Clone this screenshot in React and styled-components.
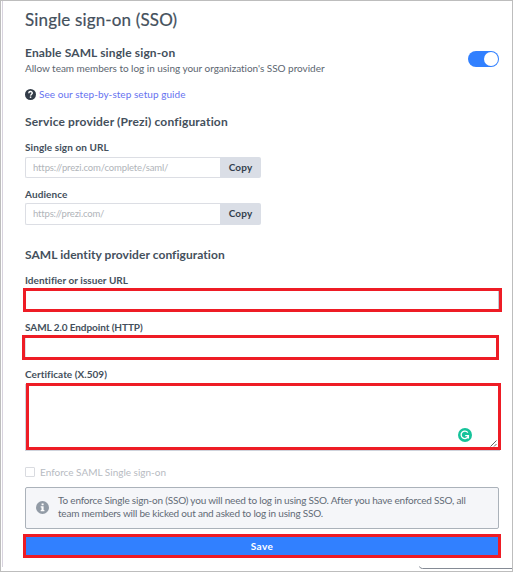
import React from "react";
import styled, { createGlobalStyle } from "styled-components";

const GlobalStyle = createGlobalStyle`
  * { box-sizing: border-box; }
  body { margin: 0; background: #fff; }
`;

const Page = styled.div`
  width: 513px;
  height: 572px;
  border: 1px solid #bdbdbd;
  padding-left: 1px;
  position: relative;
  overflow: hidden;
  font-family: Lato, "Open Sans", sans-serif;
  color: #44505c;
`;

const Panel = styled.main`
  height: 566px;
  border-left: 1px solid #d8d3de;
  padding: 8px 11px 0 22px;
  display: flex;
  flex-direction: column;
`;

const Title = styled.h1`
  margin: 0;
  font-size: 17px;
  line-height: 22px;
  font-weight: 400;
  letter-spacing: 0.15px;
  white-space: nowrap;
  -webkit-text-stroke: 0.2px currentColor;
`;

const Heading = styled.h2`
  margin: ${(p) => p.$top || 0}px 0 0;
  font-size: 12px;
  line-height: 16px;
  font-weight: 700;
  letter-spacing: ${(p) => p.$spacing}px;
  white-space: nowrap;
`;

const EnableRow = styled.section`
  display: flex;
  justify-content: space-between;
  margin-top: 14px;
  padding-right: 2px;
`;

const Description = styled.p`
  margin: 0;
  font-size: 10px;
  line-height: 14px;
  letter-spacing: -0.03px;
  color: #5c6670;
  white-space: nowrap;
`;

const Toggle = styled.div`
  width: 31px;
  height: 16px;
  margin-top: 6px;
  padding: 1px;
  border-radius: 8px;
  background: #3180ff;
  display: flex;
  justify-content: flex-end;
`;

const Knob = styled.span`
  width: 14px;
  height: 14px;
  border-radius: 50%;
  background: #fff;
`;

const Guide = styled.div`
  display: flex;
  align-items: center;
  gap: 3px;
  height: 14px;
  margin-top: 12px;
`;

const GuideLink = styled.a`
  font-size: 10px;
  line-height: 14px;
  letter-spacing: 0.05px;
  color: #6672f0;
  white-space: nowrap;
`;

const Label = styled.label`
  display: block;
  margin-top: ${(p) => p.$top}px;
  font-size: 10px;
  line-height: 14px;
  font-weight: 700;
  letter-spacing: ${(p) => p.$spacing}px;
  white-space: nowrap;
`;

const CopyField = styled.div`
  display: flex;
  width: 236px;
  height: ${(p) => p.$height}px;
  margin-top: ${(p) => p.$top}px;
`;

const Value = styled.div`
  width: 195px;
  border: 1px solid #dcdee4;
  border-right: 0;
  border-radius: 2px 0 0 2px;
  padding: 0 0 1px 7px;
  display: flex;
  align-items: center;
  font-size: 9.5px;
  letter-spacing: ${(p) => p.$spacing}px;
  color: #b0b4b9;
`;

const CopyButton = styled.button`
  width: 41px;
  border: 0;
  padding: 0 0 2px;
  border-radius: 0 2px 2px 0;
  background: #dadee6;
  color: #333f4d;
  font: 700 10px/14px Lato, sans-serif;
  letter-spacing: 0.15px;
`;

const MarkedField = styled.div`
  width: ${(p) => p.$width}px;
  height: ${(p) => p.$height}px;
  margin: ${(p) => p.$top}px 0 0 ${(p) => p.$left}px;
  border: 3px solid #ee1c25;
  background: #fff;
  flex: none;
`;

const Identifier = styled(MarkedField)`
  box-shadow: inset -1px 0 #c5c9d2;
`;

const Endpoint = styled(MarkedField)`
  box-shadow: inset 1px 0 #dfe1e6;
`;

const Certificate = styled(MarkedField)`
  position: relative;
  box-shadow: -1px 1px 0 #cfd3dc;
`;

const AssistantBadge = styled.svg`
  position: absolute;
  right: 26px;
  bottom: 5px;
`;

const ResizeGrip = styled.svg`
  position: absolute;
  right: 1px;
  bottom: 0;
`;

const EnforceRow = styled.label`
  display: flex;
  align-items: center;
  gap: 5px;
  height: 14px;
  margin-top: 15px;
  font-size: 10px;
  line-height: 14px;
  letter-spacing: 0;
  color: #b7bbc2;
  white-space: nowrap;
`;

const Checkbox = styled.span`
  width: 10px;
  height: 10px;
  border: 1px solid #d9dbe0;
  border-radius: 1px;
`;

const Notice = styled.aside`
  display: flex;
  align-items: center;
  width: 474px;
  height: 42px;
  margin-top: 8px;
  padding: 0 0 2px 10px;
  gap: 9px;
  border: 1px solid #abb2ba;
  border-radius: 2px;
  background: #f5f6f9;
`;

const NoticeText = styled.p`
  margin: 0;
  font-size: 10px;
  line-height: 13px;
  letter-spacing: -0.2px;
  color: #626b76;
  white-space: nowrap;
`;

const SaveButton = styled.button`
  width: 478px;
  height: 24px;
  margin: 5px 0 0 -2px;
  padding: 0 0 1px;
  border: 3px solid #ee1c25;
  background: #3180ff;
  color: #fff;
  font: 700 10px/14px Lato, sans-serif;
  letter-spacing: 0.45px;
  flex: none;
`;

const CornerLine = styled.svg`
  position: absolute;
  right: 0;
  bottom: 0;
`;

const HelpIcon = () => (
  <svg width="11" height="11" viewBox="0 0 10 10">
    <circle cx="5" cy="5" r="5" fill="#333c48" />
    <path d="M3.4 3.8C3.5 1.7 6.7 1.8 6.6 3.8C6.5 4.8 5.2 4.7 5.1 6" fill="none" stroke="#fff" strokeWidth="1.3" />
    <rect x="4.4" y="6.8" width="1.3" height="1.3" fill="#fff" />
  </svg>
);

const InfoIcon = () => (
  <svg width="13" height="13" viewBox="0 0 13 13">
    <circle cx="6.5" cy="6.5" r="6.5" fill="#929ba6" />
    <path d="M5.6 2.5h2v1.8h-2zM4.7 5.3h2.9v3.8h.8v1.2H4.7V9.1h.8V6.5h-.8z" fill="#fff" />
  </svg>
);

export default function App() {
  return (
    <>
      <GlobalStyle />
      <Page>
        <Panel>
          <Title>Single sign-on (SSO)</Title>
          <EnableRow>
            <div>
              <Heading $spacing={0.13}>Enable SAML single sign-on</Heading>
              <Description>Allow team members to log in using your organization's SSO provider</Description>
            </div>
            <Toggle role="switch" aria-checked="true"><Knob /></Toggle>
          </EnableRow>
          <Guide>
            <HelpIcon />
            <GuideLink>See our step-by-step setup guide</GuideLink>
          </Guide>

          <Heading $top={13} $spacing={0.16}>Service provider (Prezi) configuration</Heading>
          <Label $top={10} $spacing={0.08}>Single sign on URL</Label>
          <CopyField $top={3} $height={21}>
            <Value $spacing={-0.14}>https://prezi.com/complete/saml/</Value>
            <CopyButton>Copy</CopyButton>
          </CopyField>
          <Label $top={9} $spacing={0.1}>Audience</Label>
          <CopyField $top={2} $height={22}>
            <Value $spacing={-0.18}>https://prezi.com/</Value>
            <CopyButton>Copy</CopyButton>
          </CopyField>

          <Heading $top={22} $spacing={0.06}>SAML identity provider configuration</Heading>
          <Label $top={10} $spacing={0.04}>Identifier or issuer URL</Label>
          <Identifier $top={1} $left={-2} $width={479} $height={24} />
          <Label $top={8} $spacing={-0.08}>SAML 2.0 Endpoint (HTTP)</Label>
          <Endpoint $top={1} $left={-3} $width={477} $height={25} />
          <Label $top={7} $spacing={0.04}>Certificate (X.509)</Label>
          <Certificate $top={2} $left={1} $width={475} $height={67}>
            <AssistantBadge width="14" height="14" viewBox="0 0 14 14">
              <circle cx="7" cy="7" r="7" fill="#15c39a" />
              <path d="M9.8 4.6A3.7 3.7 0 1 0 10.2 8.4M7.2 7.7h3.2v2.8" fill="none" stroke="#fff" strokeWidth="1.3" />
            </AssistantBadge>
            <ResizeGrip width="7" height="7" viewBox="0 0 7 7">
              <path d="M.5 6.5l6-6M4 6.5L6.5 4" stroke="#555" strokeWidth=".9" />
            </ResizeGrip>
          </Certificate>

          <EnforceRow><Checkbox />Enforce SAML Single sign-on</EnforceRow>
          <Notice>
            <InfoIcon />
            <NoticeText>
              To enforce Single sign-on (SSO) you will need to log in using SSO. After you have enforced SSO, all<br />
              team members will be kicked out and asked to log in using SSO.
            </NoticeText>
          </Notice>
          <SaveButton>Save</SaveButton>
        </Panel>
        <CornerLine width="93" height="5" viewBox="0 0 93 5">
          <path d="M.5 0.5Q1 2.5 3.5 2.5H93" fill="none" stroke="#858b95" />
        </CornerLine>
      </Page>
    </>
  );
}
